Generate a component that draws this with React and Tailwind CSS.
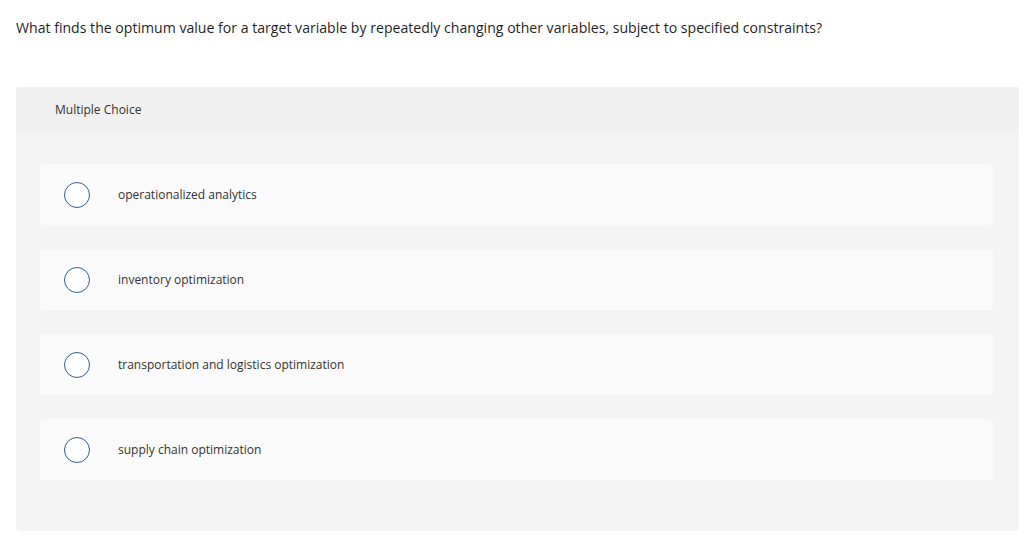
const options = [
  'operationalized analytics',
  'inventory optimization',
  'transportation and logistics optimization',
  'supply chain optimization',
];

export default function App() {
  return (
    <div className="min-h-[544px] bg-white text-[#222] font-['Open_Sans',Arial,sans-serif]">
      <div className="px-4 pt-[18px] text-[14.1px] leading-[19px] text-[#1f1f1f]">
        What finds the optimum value for a target variable by repeatedly changing other variables, subject to specified constraints?
      </div>

      <div className="ml-4 mr-[5px] mt-[50px] rounded-[3px] bg-[#f4f4f4]">
        <div className="h-[46px] flex items-center px-[39px] bg-[#f0f0f0] rounded-t-[3px] text-[12px] text-[#333]">
          Multiple Choice
        </div>
        <div className="flex flex-col gap-6 pl-6 pr-[26px] pt-[31px] pb-[51px]">
          {options.map((label) => (
            <label
              key={label}
              className="h-[61px] flex items-center rounded-[4px] bg-[#fafafa] cursor-pointer"
            >
              <span className="ml-6 w-[26px] h-[26px] rounded-full border border-[#2d5f8e] bg-white shrink-0" />
              <span className="ml-[28px] pt-px text-[12px] text-[#333]">{label}</span>
            </label>
          ))}
        </div>
      </div>
    </div>
  );
}
